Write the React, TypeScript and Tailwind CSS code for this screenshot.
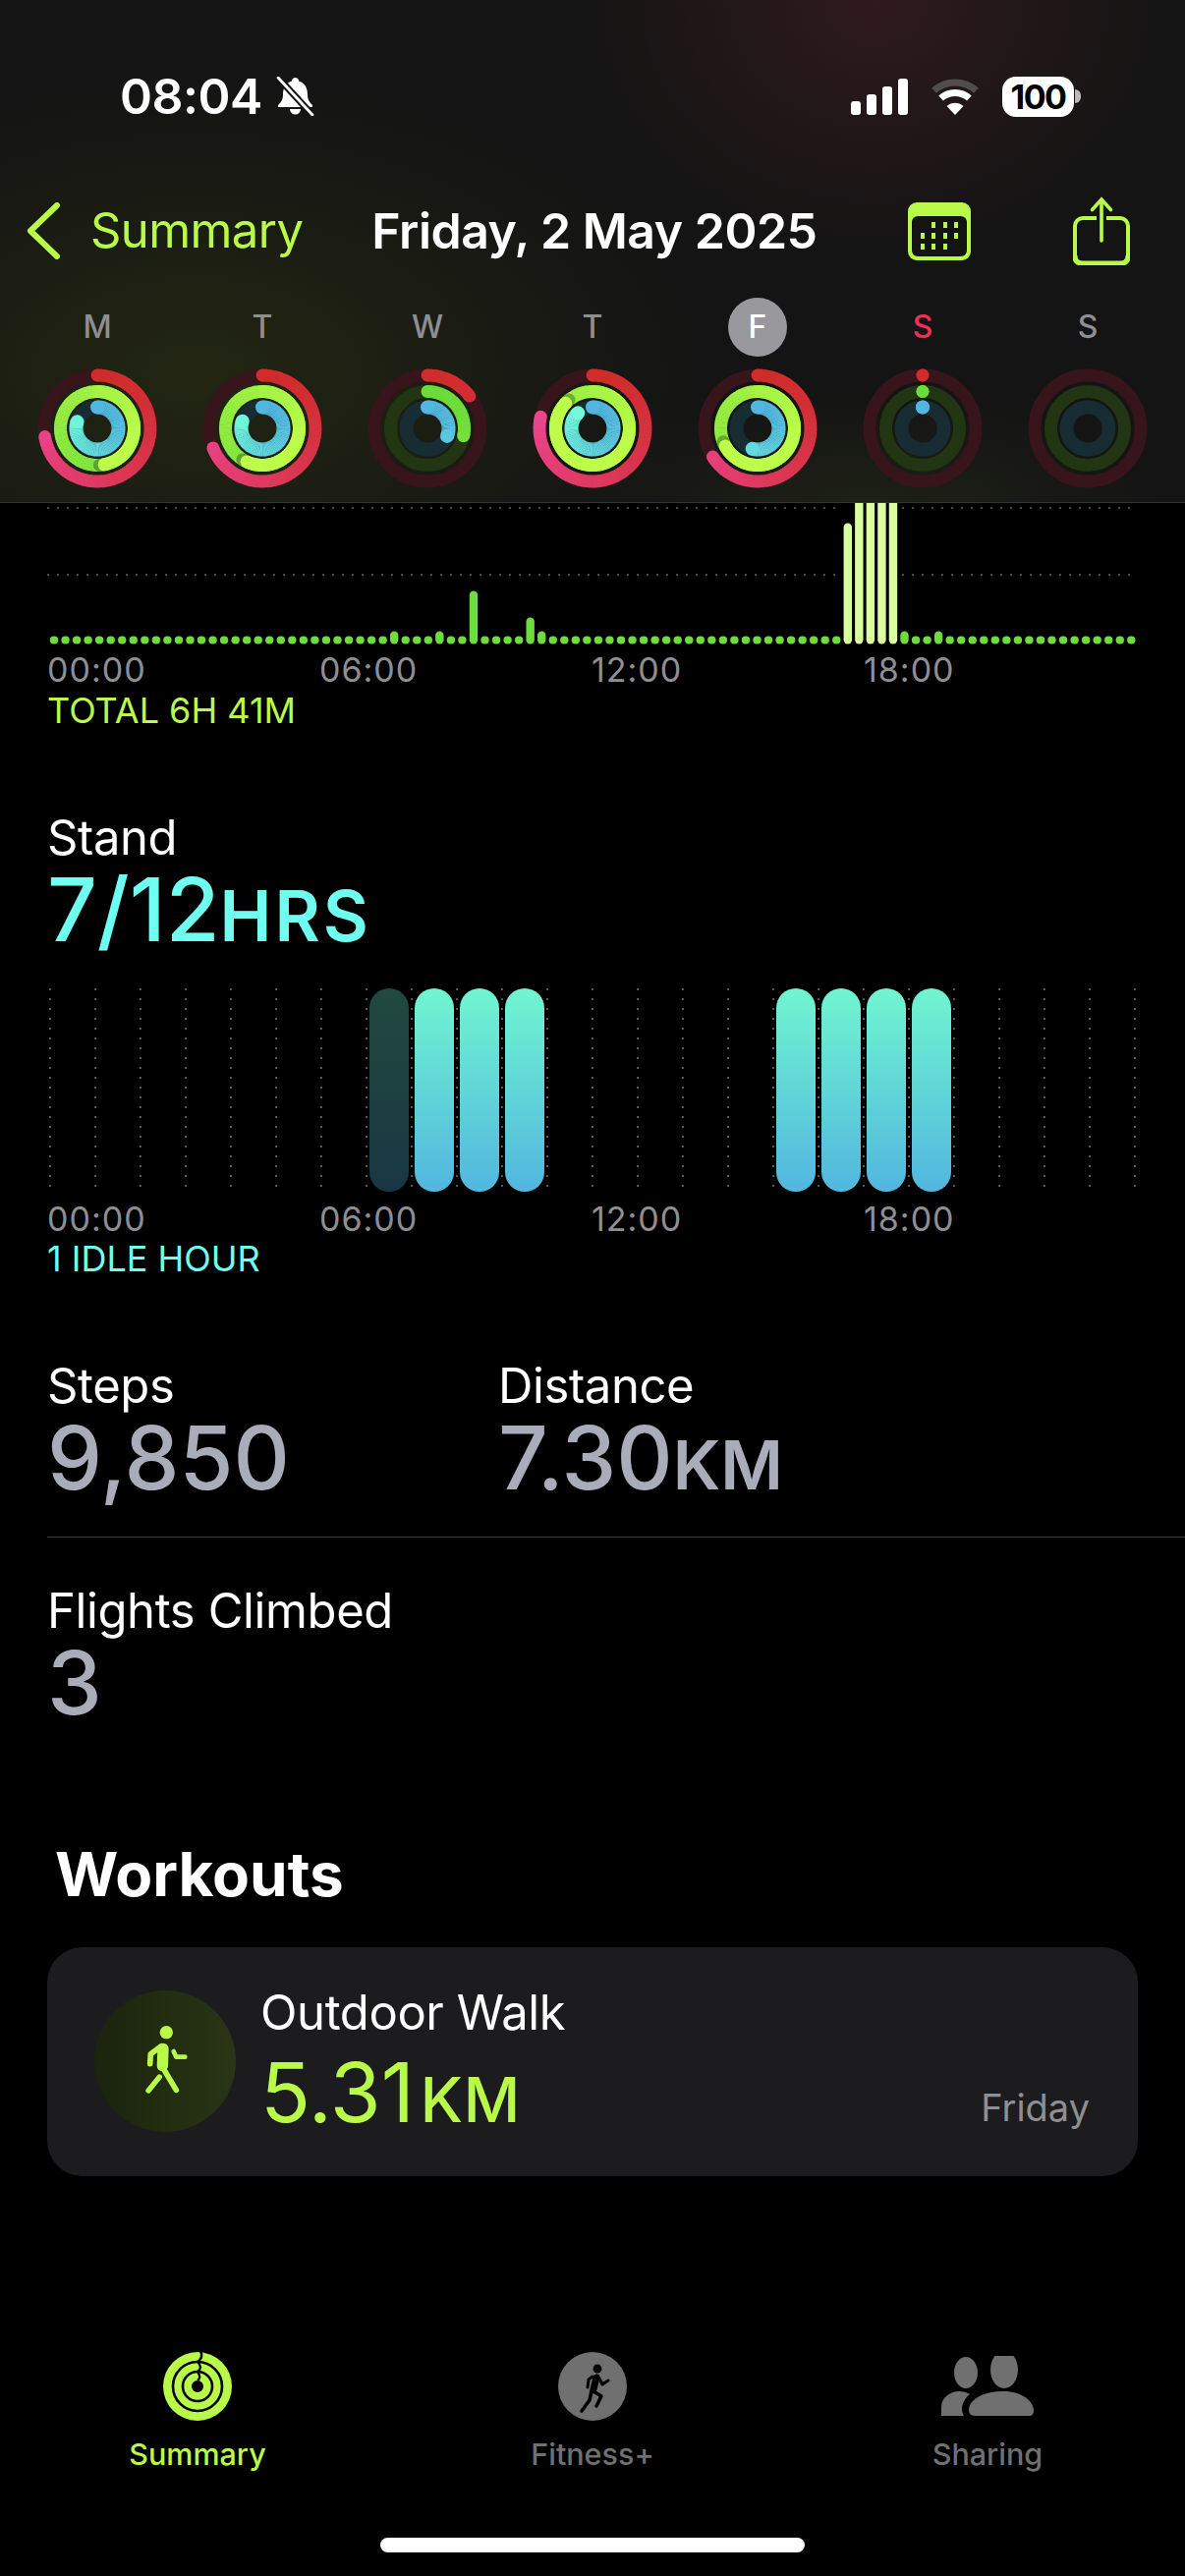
import React from "react";

const LIME = "#b9f94a";

type RingColors = { from: number[]; to: number[]; span: number; track: string; r: number; sw: number };

const RED: RingColors = { from: [208, 44, 43], to: [236, 69, 144], span: 0.78, track: "#37151a", r: 54, sw: 12.8 };
const GREEN: RingColors = { from: [107, 220, 58], to: [189, 253, 74], span: 1.3, track: "#223613", r: 37.5, sw: 13 };
const BLUE: RingColors = { from: [82, 182, 224], to: [114, 250, 219], span: 0.85, track: "#182c33", r: 21.5, sw: 14 };

const days = [
  { label: "M", values: [0.725, 1.47, 0.8] },
  { label: "T", values: [0.69, 1.57, 0.805] },
  { label: "W", values: [0.146, 0.283, 0.31] },
  { label: "T", values: [0.785, 1.87, 0.88] },
  { label: "F", values: [0.66, 1.67, 0.54], selected: true },
  { label: "S", values: [0, 0, 0], today: true },
  { label: "S", values: [-1, -1, -1] },
];

function point(r: number, turn: number) {
  const a = turn * 2 * Math.PI;
  return [r * Math.sin(a), -r * Math.cos(a)];
}

function mix(c: RingColors, t: number) {
  const k = Math.pow(Math.min(t / c.span, 1), 1.4);
  const rgb = c.from.map((v, i) => Math.round(v + (c.to[i] - v) * k));
  return `rgb(${rgb.join(",")})`;
}

function Arc({ c, value }: { c: RingColors; value: number }) {
  if (value < 0) return null;
  const steps = Math.ceil(value * 90);
  const [sx, sy] = point(c.r, 0);
  const [ex, ey] = point(c.r, value);
  const [nx, ny] = point(c.r, value + 0.02);
  const segments = [];
  for (let i = 0; i < steps; i++) {
    const t0 = (value * i) / steps;
    const t1 = Math.min((value * (i + 1)) / steps + 0.002, value);
    const [x0, y0] = point(c.r, t0);
    const [x1, y1] = point(c.r, t1);
    segments.push(
      <path
        key={i}
        d={`M${x0} ${y0}A${c.r} ${c.r} 0 0 1 ${x1} ${y1}`}
        fill="none"
        stroke={mix(c, t0)}
        strokeWidth={c.sw}
      />
    );
  }
  return (
    <g>
      <circle cx={sx} cy={sy} r={c.sw / 2} fill={mix(c, 0)} />
      {segments}
      {value > 1 && <circle cx={nx} cy={ny} r={c.sw / 2} fill="#000" opacity="0.28" />}
      <circle cx={ex} cy={ey} r={c.sw / 2} fill={mix(c, value)} />
    </g>
  );
}

function Rings({ values }: { values: number[] }) {
  return (
    <svg width="122" height="122" viewBox="-61 -61 122 122" className="block">
      {[RED, GREEN, BLUE].map((c, i) => (
        <g key={i}>
          <circle r={c.r} fill="none" stroke={c.track} strokeWidth={c.sw} />
          <Arc c={c} value={values[i]} />
        </g>
      ))}
    </svg>
  );
}

function BellSlash() {
  return (
    <svg width="41" height="40" viewBox="0 0 41 40" className="ml-[13px]">
      <path
        d="M20.5 1c2 0 3.5 1.500 3.500 3.500 7 2 9 8 9 14 0 5 2 7.500 5 10.500v2H3v-2c3-3 5-5.500 5-10.500 0-6 2-12 9-14C17 2.500 18.500 1 20.500 1z"
        fill="#fff"
      />
      <path d="M15 33h11a5.500 5.500 0 0 1-11 0z" fill="#fff" />
      <path d="M3 1l35 38" stroke="#141414" strokeWidth="7" />
      <path d="M3 1l35 38" stroke="#fff" strokeWidth="2.800" strokeLinecap="round" />
    </svg>
  );
}

function Signal() {
  return (
    <svg width="58" height="37" viewBox="0 0 58 37">
      <rect x="0" y="23" width="10" height="14" rx="3" fill="#fff" />
      <rect x="16" y="16" width="10" height="21" rx="3" fill="#fff" />
      <rect x="32" y="8" width="10" height="29" rx="3" fill="#fff" />
      <rect x="48" y="0" width="10" height="37" rx="3" fill="#fff" />
    </svg>
  );
}

function Wifi() {
  return (
    <svg width="52" height="37" viewBox="0 0 52 37">
      <path d="M4.600 12.200A32 32 0 0 1 47.400 12.200" fill="none" stroke="#514d4d" strokeWidth="7" />
      <path d="M11.600 20A21.500 21.500 0 0 1 40.400 20" fill="none" stroke="#fff" strokeWidth="7" />
      <path d="M26 37L17.500 28A12.500 12.500 0 0 1 34.500 28Z" fill="#fff" />
    </svg>
  );
}

function CalendarIcon() {
  const rows = [
    [26, 38, 49],
    [15, 26, 38, 49],
    [15, 26, 38],
  ];
  return (
    <svg width="64" height="59" viewBox="0 0 64 59">
      <rect width="64" height="59" rx="9" fill={LIME} />
      <rect x="4" y="14" width="56" height="41" rx="6" fill="#141414" />
      {rows.map((row, y) =>
        row.map((x) => <rect key={`${y}-${x}`} x={x - 2} y={20 + y * 11} width="4" height="6" fill={LIME} />)
      )}
    </svg>
  );
}

function ShareIcon() {
  return (
    <svg width="58" height="70" viewBox="0 0 58 70">
      <rect x="2" y="22" width="54" height="46" rx="8" fill="none" stroke={LIME} strokeWidth="4" />
      <path d="M56 60v2a6 6 0 0 1-6 6H8a6 6 0 0 1-6-6v-2" fill="none" stroke={LIME} strokeWidth="5" />
      <rect x="24" y="20" width="10" height="4" fill="#141414" />
      <path d="M29 3v42M19.500 13.500L29 3l9.500 10.500" fill="none" stroke={LIME} strokeWidth="3.600" strokeLinecap="round" />
    </svg>
  );
}

// Steps per quarter hour, drawn from the point under the header
const moveBars: Record<number, number> = { 30: 13, 34: 13, 37: 54, 42: 27, 43: 13, 70: 123, 71: 160, 72: 160, 73: 160, 74: 160, 75: 13, 78: 13 };

function MoveChart() {
  const base = 143.5;
  return (
    <svg width="1206" height="148" viewBox="0 0 1206 148" className="block">
      <path d="M48 5H1150M48 73H1150" stroke="#4b4b4f" strokeWidth="2" strokeDasharray="2 8" />
      <rect x="854" y="0" width="62" height="144" fill="#000" />
      {Array.from({ length: 96 }).map((_, i) => {
        const h = moveBars[i] ?? 8;
        const light = i >= 70 && i <= 74;
        return (
          <rect
            key={i}
            x={55 + i * 11.54 - 4.2}
            y={base - h}
            width="8.400"
            height={h}
            rx="4.200"
            fill={light ? "#daff9e" : "#6edc3d"}
          />
        );
      })}
    </svg>
  );
}

const standHours = [7, 8, 9, 10, 16, 17, 18, 19];

function StandChart() {
  return (
    <svg width="1206" height="208" viewBox="0 0 1206 208" className="block">
      <defs>
        <linearGradient id="stand" x1="0" y1="0" x2="0" y2="1">
          <stop offset="0" stopColor="#70f5d0" />
          <stop offset="1" stopColor="#52b6df" />
        </linearGradient>
      </defs>
      {Array.from({ length: 25 }).map((_, i) => (
        <path key={i} d={`M${51 + i * 46} 0V208`} stroke="#6c6c70" strokeWidth="1.600" strokeDasharray="2 8" />
      ))}
      {standHours.map((h, i) => (
        <rect
          key={h}
          x={51 + h * 46 + 3}
          y="0"
          width="40"
          height="207"
          rx="20"
          fill="url(#stand)"
          opacity={i === 0 ? 0.3 : 1}
        />
      ))}
    </svg>
  );
}

function AxisLabels() {
  return (
    <div className="grid h-[40px] grid-cols-[277px_277px_277px_277px] pl-[48px] text-[34px] leading-[40px] tracking-[1px] text-[#8e8e93]">
      <span>00:00</span>
      <span>06:00</span>
      <span>12:00</span>
      <span>18:00</span>
    </div>
  );
}

function Walker() {
  return (
    <svg width="144" height="144" viewBox="0 0 432 432">
      <defs>
        <linearGradient id="walkbg" x1="0" y1="0" x2="1" y2="0">
          <stop offset="0" stopColor="#1b240c" />
          <stop offset="1" stopColor="#293516" />
        </linearGradient>
      </defs>
      <circle cx="216" cy="216" r="216" fill="url(#walkbg)" />
      <g transform="translate(-18 -22)" fill="none" stroke={LIME} strokeLinecap="round" strokeLinejoin="round">
        <circle cx="238" cy="150" r="20" fill={LIME} stroke="none" />
        <path d="M228 200L226 252" strokeWidth="34" />
        <path d="M226 256L268 326" strokeWidth="17" />
        <path d="M217 286L183 328" strokeWidth="16" />
        <path d="M222 192L190 216L188 246" strokeWidth="17" />
        <path d="M260 208L268 225H295" strokeWidth="14" />
      </g>
    </svg>
  );
}

function ActivityTabIcon() {
  return (
    <svg width="70" height="70" viewBox="-35 -35 70 70">
      <circle r="35" fill={LIME} />
      <circle r="25" fill="none" stroke="#000" strokeWidth="2.600" />
      <circle r="15" fill="none" stroke="#000" strokeWidth="2.600" />
      <circle r="6" fill="#000" />
      <path d="M3-36C6-30 3-27 0-25C4-21 4-18 0-15C3-11 3-8 0-6" fill="none" stroke="#000" strokeWidth="2.400" />
    </svg>
  );
}

function FitnessTabIcon() {
  return (
    <svg width="70" height="70" viewBox="-35 -35 70 70">
      <circle r="35" fill="#707070" />
      <g fill="none" stroke="#000" strokeLinecap="round" strokeLinejoin="round">
        <circle cx="5" cy="-18" r="4.500" fill="#000" stroke="none" />
        <path d="M4-9L1 3" strokeWidth="7" />
        <path d="M0-10L-4-7L-5 1" strokeWidth="3" />
        <path d="M7-8L10-2L16-6" strokeWidth="3" />
        <path d="M1 5L9 10L4 20" strokeWidth="3.600" />
        <path d="M-1 5L-3 14L-11 25" strokeWidth="3.600" />
      </g>
    </svg>
  );
}

function SharingTabIcon() {
  return (
    <svg width="94" height="62" viewBox="0 0 94 62">
      <ellipse cx="25" cy="17" rx="12" ry="16" fill="#707070" />
      <ellipse cx="64" cy="14" rx="14" ry="19" fill="#707070" />
      <path d="M0 61V52C0 42 10 36 18 36C22 36 26 37 29 39C24 43 21 49 21 54C21 57 22 60 23 61Z" fill="#707070" />
      <path d="M34 61C30 61 28 58 28 55C28 45 42 36 63 36C82 36 94 46 94 56C94 59 92 61 90 61Z" fill="#707070" />
    </svg>
  );
}

export default function App() {
  return (
    <div className="flex h-[2622px] w-[1206px] flex-col overflow-hidden bg-black font-['Inter',sans-serif] text-white">
      {/* Header */}
      <div className="h-[512px] shrink-0 border-b border-[#333335] bg-[#141414] bg-[radial-gradient(ellipse_300px_260px_at_890px_0px,#2f1a1d,transparent),radial-gradient(ellipse_520px_300px_at_200px_380px,#222612,transparent),radial-gradient(ellipse_300px_110px_at_880px_512px,#1e2116,transparent)]">
        <div className="mt-[70px] flex h-[56px] items-center pl-[122px] pr-[106px] pt-0">
          <span className="text-[50px] font-semibold tracking-[-0.5px]">08:04</span>
          <BellSlash />
          <div className="ml-auto flex items-center">
            <Signal />
            <div className="ml-[22px]">
              <Wifi />
            </div>
            <div className="ml-[22px] flex h-[41px] w-[73px] items-center justify-center rounded-[14px] bg-white text-[34px] font-bold tracking-[-1.5px] text-black">
              100
            </div>
            <div className="ml-[1px] h-[14px] w-[6px] rounded-r-full bg-white/70" />
          </div>
        </div>

        <div className="mt-[71px] flex h-[76px] items-center text-[50px]">
          <svg width="36" height="58" viewBox="0 0 36 58" className="ml-[26px]">
            <path d="M32 3L5 29L32 55" fill="none" stroke={LIME} strokeWidth="6" strokeLinecap="round" strokeLinejoin="round" />
          </svg>
          <span className="ml-[30px] text-[49px] tracking-[-0.6px] text-[#b9f94a]">Summary</span>
          <span className="ml-[70px] font-semibold tracking-[-0.5px]">Friday, 2 May 2025</span>
          <div className="ml-[92px]">
            <CalendarIcon />
          </div>
          <div className="ml-[104px]">
            <ShareIcon />
          </div>
        </div>

        <div className="mt-[30px] grid grid-cols-7 px-[15px]">
          {days.map((d, i) => (
            <div key={i} className="flex flex-col items-center">
              <div
                className={`flex h-[60px] w-[60px] items-center justify-center rounded-full text-[32px] font-medium ${
                  d.selected ? "bg-[#98989d] text-white" : d.today ? "text-[#ef2f56]" : "text-[#8e8e93]"
                }`}
              >
                {d.label}
              </div>
              <div className="mt-[12px]">
                <Rings values={d.values} />
              </div>
            </div>
          ))}
        </div>
      </div>

      {/* Move chart, scrolled under the header */}
      <MoveChart />
      <div className="mt-[2px]">
        <AxisLabels />
      </div>
      <div className="mt-[1px] h-[40px] pl-[48px] text-[36px] leading-[40px] text-[#b9f94a]">TOTAL 6H 41M</div>

      {/* Stand */}
      <div className="mt-[80px] h-[60px] pl-[48px] text-[49px] leading-[60px] tracking-[-0.4px]">Stand</div>
      <div className="mt-[3px] h-[80px] pl-[48px] font-medium leading-[80px] text-[#6ffff0]">
        <span className="text-[89px]">7/12</span>
        <span className="text-[71px] font-semibold tracking-[3px]">HRS</span>
      </div>
      <div className="mt-[40px]">
        <StandChart />
      </div>
      <div className="mt-[7px]">
        <AxisLabels />
      </div>
      <div className="h-[40px] pl-[48px] text-[36px] leading-[40px] text-[#6ffff0]">1 IDLE HOUR</div>

      {/* Steps, distance, flights */}
      <div className="mt-[80px] flex pl-[48px]">
        <div className="w-[459px]">
          <div className="h-[60px] text-[49px] leading-[60px] tracking-[-0.4px]">Steps</div>
          <div className="mt-[3px] h-[80px] text-[89px] font-medium leading-[80px] text-[#a9adb9]">9,850</div>
        </div>
        <div>
          <div className="h-[60px] text-[49px] leading-[60px] tracking-[-0.4px]">Distance</div>
          <div className="mt-[3px] h-[80px] font-medium leading-[80px] text-[#a9adb9]">
            <span className="text-[89px]">7.30</span>
            <span className="text-[69px] font-semibold">KM</span>
          </div>
        </div>
      </div>
      <div className="ml-[48px] mt-[40px] h-[1px] shrink-0 bg-[#3a3a3c]" />
      <div className="mt-[45px] h-[60px] pl-[48px] text-[49px] leading-[60px] tracking-[-0.4px]">Flights Climbed</div>
      <div className="mt-[3px] h-[80px] pl-[48px] text-[89px] font-medium leading-[80px] text-[#a9adb9]">3</div>

      {/* Workouts */}
      <div className="mt-[115px] h-[80px] pl-[56px] text-[62px] font-bold leading-[80px]">Workouts</div>
      <div className="mx-[48px] mt-[34px] flex h-[233px] shrink-0 rounded-[36px] bg-[#1c1c1e]">
        <div className="ml-[48px] mt-[44px]">
          <Walker />
        </div>
        <div className="ml-[25px] pt-[42px]">
          <div className="h-[50px] text-[49px] leading-[50px] tracking-[-0.4px]">Outdoor Walk</div>
          <div className="mt-[16px] h-[80px] leading-[80px] text-[#b9f94a]">
            <span className="text-[84px]">5.31</span>
            <span className="ml-[6px] text-[63px] font-medium tracking-[0.5px]">KM</span>
          </div>
        </div>
        <div className="mb-[48px] ml-auto mr-[49px] self-end text-[38px] leading-[44px] text-[#8e8e93]">Friday</div>
      </div>

      {/* Tab bar */}
      <div className="mt-[179px] grid grid-cols-3">
        <div className="flex flex-col items-center">
          <ActivityTabIcon />
          <span className="mt-[14px] h-[40px] text-[30.5px] font-medium leading-[40px] text-[#b9f94a]">Summary</span>
        </div>
        <div className="flex flex-col items-center">
          <FitnessTabIcon />
          <span className="mt-[14px] h-[40px] text-[30.5px] font-medium leading-[40px] text-[#707070]">Fitness+</span>
        </div>
        <div className="flex flex-col items-center">
          <div className="flex h-[70px] items-center">
            <SharingTabIcon />
          </div>
          <span className="mt-[14px] h-[40px] text-[30.5px] font-medium leading-[40px] text-[#707070]">Sharing</span>
        </div>
      </div>
      <div className="mx-auto mt-[65px] h-[15px] w-[432px] shrink-0 rounded-full bg-white" />
    </div>
  );
}
